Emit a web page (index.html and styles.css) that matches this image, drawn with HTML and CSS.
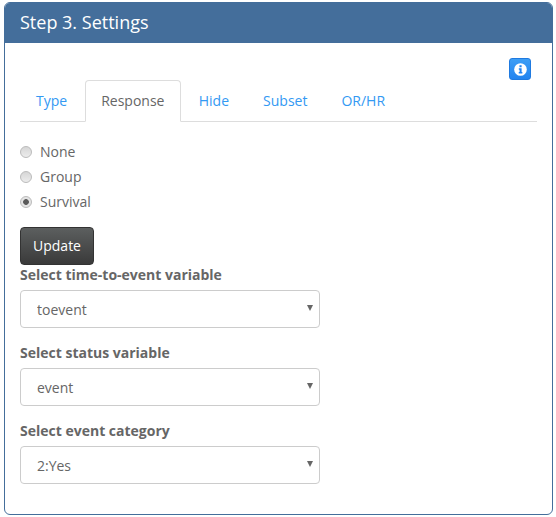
FILE: index.html
```html
<!DOCTYPE html>
<html lang="en">
<head>
  <meta charset="utf-8">
  <title>Step 3. Settings</title>
  <link rel="stylesheet" href="styles.css">
</head>
<body>

<div class="panel">
  <h3 class="panel-heading">Step 3. Settings</h3>
  <div class="panel-body">
    <div class="info-row">
      <button class="btn-info" type="button" aria-label="Info">
        <svg width="13" height="13" viewBox="0 0 14 14">
          <circle cx="7" cy="7" r="6.8" fill="#fff"/>
          <rect x="5.9" y="2.4" width="2.3" height="2.2" fill="#2284f0"/>
          <path d="M5.2 5.6h3v4.2h0.8v1.6H5.1V9.8h0.9V7.2h-0.8z" fill="#2284f0"/>
        </svg>
      </button>
    </div>
    <ul class="tabs">
      <li><a href="#">Type</a></li>
      <li class="active"><a href="#">Response</a></li>
      <li><a href="#">Hide</a></li>
      <li><a href="#">Subset</a></li>
      <li><a href="#">OR/HR</a></li>
    </ul>
    <div class="radios">
      <label class="radio"><input type="radio" name="response"> None</label>
      <label class="radio"><input type="radio" name="response"> Group</label>
      <label class="radio"><input type="radio" name="response" checked> Survival</label>
    </div>
    <button class="btn-update" type="button">Update</button>
    <div class="field">
      <label class="field-label" for="time">Select time-to-event variable</label>
      <div class="select-wrap">
        <select id="time"><option>toevent</option></select>
      </div>
    </div>
    <div class="field">
      <label class="field-label" for="status">Select status variable</label>
      <div class="select-wrap">
        <select id="status"><option>event</option></select>
      </div>
    </div>
    <div class="field">
      <label class="field-label" for="category">Select event category</label>
      <div class="select-wrap">
        <select id="category"><option>2:Yes</option></select>
      </div>
    </div>
  </div>
</div>

</body>
</html>
```

FILE: styles.css
```css
* {
  box-sizing: border-box;
}
body {
  margin: 0;
  padding: 2px 3px 0 4px;
  background: #fff;
  color: #666;
  font: 14px/20px "Open Sans", sans-serif;
}
.panel {
  height: 513px;
  border: 1px solid #446e9b;
  border-radius: 6px;
  overflow: hidden;
}
.panel-heading {
  margin: 0;
  height: 40px;
  padding: 9px 15px;
  background: #446e9b;
  color: #fff;
  font-size: 18px;
  font-weight: 400;
  line-height: 20px;
}
.panel-body {
  padding: 15px;
}
.info-row {
  display: flex;
  justify-content: flex-end;
  padding-right: 6px;
}
.btn-info {
  display: flex;
  align-items: center;
  justify-content: center;
  width: 22px;
  height: 22px;
  padding: 0;
  border: 1px solid #1f7ae0;
  border-radius: 3px;
  background: linear-gradient(#3d9ef5, #2284f0);
}
.tabs {
  display: flex;
  height: 42px;
  margin: 0;
  padding: 0;
  list-style: none;
  border-bottom: 1px solid #ddd;
}
.tabs li {
  margin-right: 2px;
  height: 42px;
}
.tabs a {
  display: block;
  height: 42px;
  padding: 10px 15px;
  border: 1px solid transparent;
  border-radius: 4px 4px 0 0;
  color: #3399f3;
  text-decoration: none;
}
.tabs .active a {
  width: 95.6px;
  border-color: #ddd #ddd #fff;
  background: #fff;
  color: #666;
}
.radios {
  padding-top: 17px;
}
.radio {
  display: flex;
  align-items: center;
  gap: 8px;
  height: 25px;
}
.radio input {
  appearance: none;
  width: 12px;
  height: 12px;
  margin: 0;
  border: 1px solid #bbb;
  border-radius: 50%;
  background: linear-gradient(#d6d6d6, #ececec);
}
.radio input:checked {
  background: radial-gradient(circle, #5a5a5a 0 2.5px, #e4e4e4 3.2px);
}
.btn-update {
  display: block;
  width: 74px;
  height: 38px;
  margin-top: 13px;
  padding: 0;
  border: 1px solid #333;
  border-radius: 4px;
  background: linear-gradient(#5c5f5f, #3a3a3a);
  color: #fff;
  font: 14px/20px "Open Sans", sans-serif;
}
.field {
  margin-bottom: 15px;
}
.field-label {
  display: block;
  margin-bottom: 5px;
  font-weight: 700;
}
.select-wrap {
  position: relative;
  width: 300px;
}
.select-wrap::after {
  content: "";
  position: absolute;
  top: 15px;
  right: 7px;
  border: 3px solid transparent;
  border-top: 6px solid #666;
  border-bottom: 0;
  pointer-events: none;
}
select {
  display: block;
  width: 100%;
  height: 38px;
  padding: 2px 16px 0;
  appearance: none;
  border: 1px solid #ccc;
  border-radius: 4px;
  background: #fff;
  color: #666;
  font: 14px/20px "Open Sans", sans-serif;
}
```
